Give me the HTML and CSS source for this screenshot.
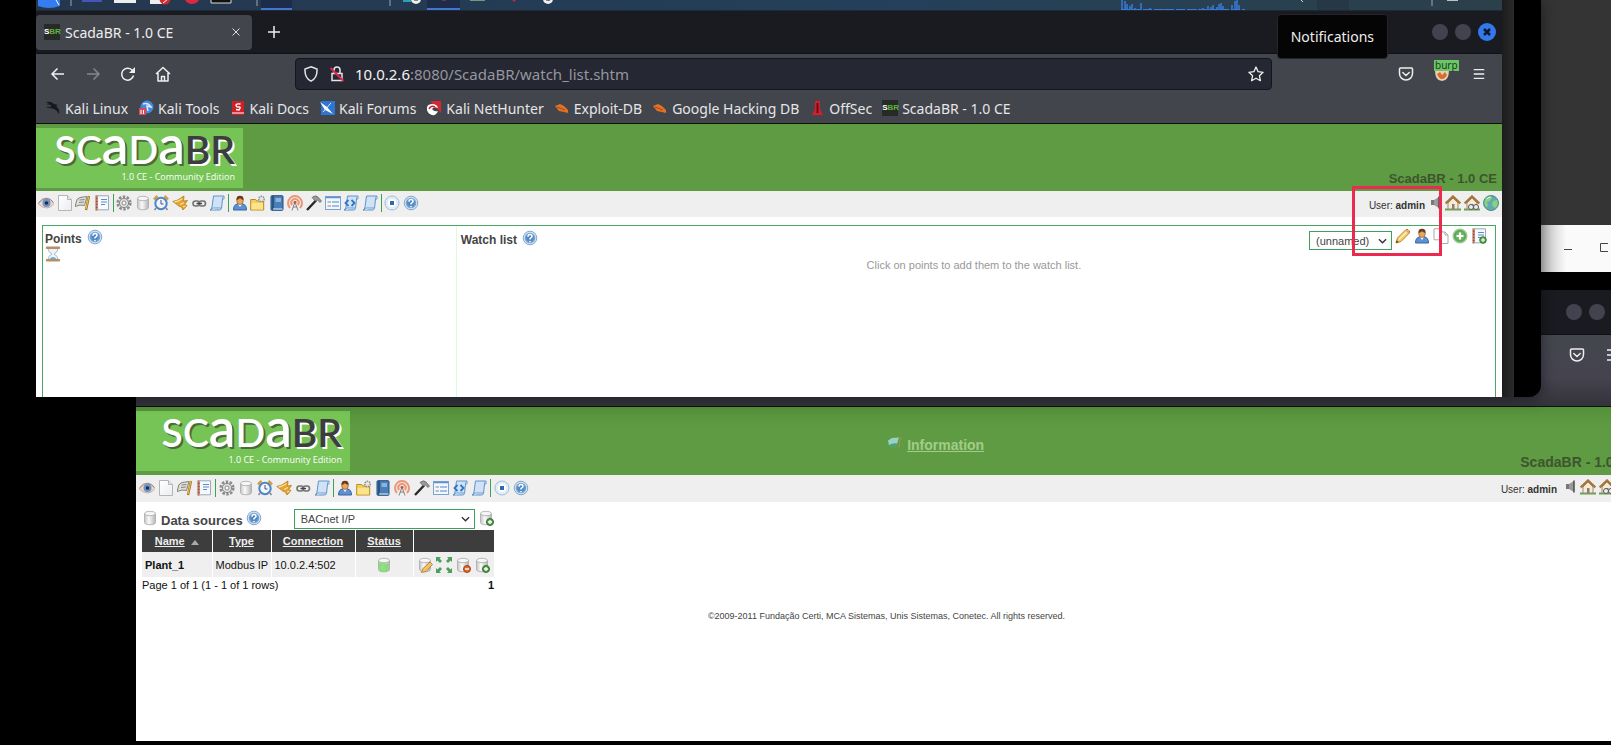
FILE: index.html
```html
<!DOCTYPE html>
<html lang="en">
<head>
<meta charset="utf-8">
<title>ScadaBR - 1.0 CE</title>
<link rel="stylesheet" href="styles.css">
</head>
<body>
<svg class="sprite" aria-hidden="true">
  <defs>
    <radialGradient id="gBlue"><stop offset="0" stop-color="#3c74b8"/><stop offset=".7" stop-color="#5f93cb"/><stop offset="1" stop-color="#86afd9"/></radialGradient>
    <linearGradient id="gCyl"><stop offset="0" stop-color="#c4c4c4"/><stop offset=".4" stop-color="#fafafa"/><stop offset="1" stop-color="#b4b4b4"/></linearGradient>
    <linearGradient id="gPage" x2="1" y2="1"><stop offset="0" stop-color="#fff"/><stop offset="1" stop-color="#e9edf2"/></linearGradient>
  </defs>
  <symbol id="eye" viewBox="0 0 16 16"><path d="M0 8.500Q4 4 8.500 4T16 8.500Q13 13 8.500 13T0 8.500z" fill="#ead9cc" stroke="#b79a8c" stroke-width=".7"/><circle cx="8.500" cy="8" r="4" fill="#6d93c8"/><circle cx="8.500" cy="8" r="1.800" fill="#1b2c50"/><path d="M.5 8Q4 3 8.500 3.200T15.500 7.500" fill="none" stroke="#97827c"/></symbol>
  <symbol id="page" viewBox="0 0 16 16"><path d="M1.500.5h9l4 4v11h-13z" fill="url(#gPage)" stroke="#b5b5b5"/><path d="M10.500.5v4h4" fill="#e5e5e5" stroke="#b5b5b5"/></symbol>
  <symbol id="flag" viewBox="0 0 16 16"><path d="M2 4.500l3-2 7-1-2.500 9-4.500-.5-5 1.500z" fill="#deded8" stroke="#85857c"/><path d="M4.500 5l5-.5M4 7.500l5-.5" stroke="#888"/><path d="M14 1l-3 14" stroke="#a2781e" stroke-width="2.400"/><path d="M13.800 1.500l-2.800 12.500" stroke="#efc253" stroke-width="1"/></symbol>
  <symbol id="report" viewBox="0 0 16 16"><path d="M3.500.8h11v14h-11z" fill="#f6f9fd" stroke="#9aa9bb"/><path d="M2.500.5v15" stroke="#a44b2c" stroke-width="2"/><path d="M1.200 2h3M1.200 5h3M1.200 8h3M1.200 11h3M1.200 14h3" stroke="#e4bfae" stroke-width=".8"/><path d="M7 4.500h6M7 7h6M7 9.500h4" stroke="#5d8cc7" stroke-width="1.200"/></symbol>
  <symbol id="gear" viewBox="0 0 16 16"><circle cx="8" cy="8" r="6.300" fill="none" stroke="#8c8c8c" stroke-width="2.600" stroke-dasharray="2.500 1.450"/><circle cx="8" cy="8" r="4.600" fill="#dedede" stroke="#868686"/><circle cx="8" cy="8" r="2" fill="#fff" stroke="#8c8c8c"/></symbol>
  <symbol id="db" viewBox="0 0 16 16"><path d="M2.500 3.500v9c0 3 11 3 11 0v-9" fill="url(#gCyl)" stroke="#aaa" stroke-width=".8"/><ellipse cx="8" cy="3.500" rx="5.500" ry="2.200" fill="#f6f6f6" stroke="#aaa" stroke-width=".8"/></symbol>
  <symbol id="clock" viewBox="0 0 16 16"><path d="M1 4.500L4.500 1M15 4.500L11.500 1" stroke="#d1a03d" stroke-width="2.500"/><path d="M3 13l-1.500 2M13 13l1.500 2" stroke="#888" stroke-width="1.500"/><circle cx="8" cy="8.500" r="5.700" fill="#f0f6fd" stroke="#4f86c6" stroke-width="2"/><path d="M8 5v4h2.500" fill="none" stroke="#47566c"/></symbol>
  <symbol id="horn" viewBox="0 0 16 16"><path d="M.8 6.500l5-1.500L12 1l-.5 5 4-.5-3 4 2.500 1-4 4.500-1.500-3-3-1-1.500-1.500z" fill="#e2a432" stroke="#b57b18" stroke-width=".8"/><path d="M2.500 7l4-1 4-2.500M8 9.500l4-2M11 12l2.500-1" stroke="#fbe09a" stroke-width="1.300" fill="none"/></symbol>
  <symbol id="chain" viewBox="0 0 16 16"><g fill="none" stroke="#737373" stroke-width="1.600"><rect x="2" y="6" width="6.500" height="5" rx="2.500"/><rect x="8" y="6" width="6.500" height="5" rx="2.500"/></g><path d="M5.500 8.500h5.500" stroke="#444" stroke-width="1.500"/></symbol>
  <symbol id="scroll" viewBox="0 0 16 16"><path d="M4.500 1h10.500q-1.500 1-1.500 3l-1 9.500q-.5 1.500-2 1.500H1q1.500-.5 2-3z" fill="#cfe2f6" stroke="#6093cb"/><path d="M1 15q2 .3 2.500-2h8.500M13.500 4H15V1" fill="#f3f9ff" stroke="#6093cb" stroke-width=".9"/></symbol>
  <symbol id="user" viewBox="0 0 16 16"><path d="M1.500 15q0-5.500 4-6h5q4 .5 4 6z" fill="#5d91d2" stroke="#3664a3"/><path d="M6 9l2 3 2-3z" fill="#fff"/><ellipse cx="8" cy="5.500" rx="3.300" ry="4" fill="#e9a65e" stroke="#8e5827" stroke-width=".7"/><path d="M4.500 5Q4 .7 8 .7T11.500 5Q9 4.500 8 3.200 7 4.500 4.500 5z" fill="#6a3e1a"/></symbol>
  <symbol id="folder" viewBox="0 0 16 16"><path d="M.7 6V4.500h5l1 1.500h7v9h-13z" fill="#f2cf63" stroke="#bb8a25"/><path d="M1.500 8h11.500v6.500H1.500z" fill="#fbe389"/><circle cx="11.500" cy="4" r="2.700" fill="#e6e6e6" stroke="#8e8e8e" stroke-width="1.500" stroke-dasharray="1.500 .8"/></symbol>
  <symbol id="book" viewBox="0 0 16 16"><rect x="2" y=".7" width="12" height="14.600" rx="1" fill="#487fb9" stroke="#234f82"/><path d="M4 1v14" stroke="#214874" stroke-width="1.500"/><path d="M6.500 4h5.500M6.500 6h5.500" stroke="#d4e4f5"/><path d="M4 14h9.500" stroke="#e6eef7"/></symbol>
  <symbol id="antenna" viewBox="0 0 16 16"><g fill="none" stroke="#ec9674" stroke-width="2"><path d="M3 13A7 7 0 1 1 13 13"/><path d="M5.200 10A3.700 3.700 0 1 1 10.800 10"/></g><path d="M8 7l-3 8.500M8 7l3 8.500M6 12h4" stroke="#877f7f" fill="none"/><circle cx="8" cy="7.300" r="1.500" fill="#c25a42"/></symbol>
  <symbol id="hammer" viewBox="0 0 16 16"><path d="M1 15L10 5.500" stroke="#282828" stroke-width="2.400"/><path d="M6 2.500Q9.500-.5 12 2l3.500 4-1.500 1.500L11.500 5 9 6 7 3.500z" fill="#9a9a9a" stroke="#5d5d5d" stroke-width=".7"/></symbol>
  <symbol id="form" viewBox="0 0 16 16"><rect x=".5" y="1.500" width="15" height="13" fill="#f2f7fd" stroke="#7ba3d2"/><path d="M1 2.500h14" stroke="#5d91cf" stroke-width="1.500"/><path d="M2.500 7H6M2.500 11H6" stroke="#888"/><path d="M7 7h7M7 11h7" stroke="#4d87ce" stroke-width="1.200"/></symbol>
  <symbol id="code" viewBox="0 0 16 16"><use href="#scroll"/><path d="M5.500 5l-3 3 3 3M8.500 5l3 3-3 3" fill="none" stroke="#2f77c4" stroke-width="1.800"/></symbol>
  <symbol id="stop" viewBox="0 0 16 16"><circle cx="8" cy="8" r="7" fill="#eaf2fb" stroke="#9fbbdb"/><circle cx="8" cy="8" r="5" fill="#fff" stroke="#d6e3f1"/><rect x="6" y="6" width="4" height="4" fill="#2f6ab0"/></symbol>
  <symbol id="help" viewBox="0 0 16 16"><circle cx="8" cy="8" r="6.800" fill="#d5e3f1" stroke="#82a8d0"/><circle cx="8" cy="8" r="5.300" fill="url(#gBlue)"/><path d="M6 6.700Q6 4.500 8 4.500t2 1.800Q10 7.500 8 8.500v1M8 11v1.200" fill="none" stroke="#fff" stroke-width="1.500"/></symbol>
  <symbol id="speaker" viewBox="0 0 12 16"><path d="M1 5h3v5H1z" fill="#777"/><path d="M4 5l5-3v11l-5-3z" fill="#9a9a9a"/><path d="M9 1.500v12" stroke="#4c4c4c" stroke-width="1.500"/></symbol>
  <symbol id="house" viewBox="0 0 16 16"><path d="M0 14.500h16" stroke="#65a54a" stroke-width="2"/><path d="M3 8v6h10V8L8 3z" fill="#f4ead7" stroke="#9b8b78"/><path d="M.7 8.500L8 1.500l7.300 7" fill="none" stroke="#a87538" stroke-width="2.300"/><path d="M7 9h2.500v5H7z" fill="#8d7d72"/></symbol>
  <symbol id="house2" viewBox="0 0 16 16"><use href="#house"/><circle cx="7" cy="12" r="2.500" fill="#eee" stroke="#555"/><circle cx="12" cy="12" r="2.500" fill="#eee" stroke="#555"/></symbol>
  <symbol id="globe" viewBox="0 0 16 16"><circle cx="8" cy="8" r="7.500" fill="#63aab1" stroke="#4b917c"/><path d="M3 3q4-3 6 0l-2 3-3 1 1 4-2 1Q0 8 3 3zM10 6l4-1q2 5-2 8l-3-3z" fill="#8dd084"/><path d="M4 4q2-2 4-2" stroke="#ddf7ef" fill="none"/></symbol>
  <symbol id="pencil" viewBox="0 0 16 16"><path d="M1 15l1.500-5L11 1.500q1-.7 2 .3l1.200 1.200q1 1 .2 2L6 13.500z" fill="#f6cf68" stroke="#b98228"/><path d="M4 11.500L12.500 3" stroke="#fff1ad" stroke-width="1.500"/><path d="M1 15l.8-2.500L3.500 14z" fill="#4a3720"/><path d="M11 2l3 3" stroke="#d8a09a" stroke-width="1.500"/></symbol>
  <symbol id="copy" viewBox="0 0 16 16"><path d="M1 .8h6l2 2v9H1z" fill="#fff" stroke="#aaa"/><path d="M6.500 4h5.500l3 3v8.500H6.500z" fill="#fff" stroke="#aaa"/><path d="M12 4v3h3" fill="none" stroke="#aaa"/></symbol>
  <symbol id="plus" viewBox="0 0 16 16"><circle cx="8" cy="8" r="6.800" fill="#6ab563" stroke="#9bc994" stroke-width="1.500"/><circle cx="8" cy="8" r="5.300" fill="none" stroke="#4b9d46" stroke-width=".8"/><path d="M8 4.500v7M4.500 8h7" stroke="#fff" stroke-width="2.200"/></symbol>
  <symbol id="reportadd" viewBox="0 0 16 16"><use href="#report"/><circle cx="12" cy="12" r="3.300" fill="#58a651" stroke="#347c31"/><path d="M12 10v4M10 12h4" stroke="#fff"/></symbol>
  <symbol id="glass" viewBox="0 0 16 16"><path d="M3 2.500Q3 6 7 8q-4 2-4 5.500h10Q13 10 9 8q4-2 4-5.500z" fill="#eaf3fb" stroke="#a8bccc"/><path d="M4.500 13Q6 11 8 11t3.500 2z" fill="#69aee0"/><path d="M2 1.800h12M2 14.200h12" stroke="#b98d68" stroke-width="2.400" stroke-linecap="round"/></symbol>
  <symbol id="dbadd" viewBox="0 0 16 16"><use href="#db"/><circle cx="12" cy="12" r="3.500" fill="#589f4d" stroke="#346f2e"/><path d="M12 10v4M10 12h4" stroke="#fff" stroke-width="1.300"/></symbol>
  <symbol id="dbdel" viewBox="0 0 16 16"><use href="#db"/><circle cx="12" cy="12" r="3.500" fill="#e0662c" stroke="#a94213"/><path d="M10 12h4" stroke="#fff" stroke-width="1.500"/></symbol>
  <symbol id="dbedit" viewBox="0 0 16 16"><use href="#db"/><path d="M4.500 15.500L6 11.500 13 5l2.500 2.500L9 14.500z" fill="#f4c45c" stroke="#a9742b" stroke-width=".8"/></symbol>
  <symbol id="dbon" viewBox="0 0 16 16"><use href="#db"/><path d="M2 7q2-2.500 6-1 3 1 4.500 0v7.500q-4 3-8.500 1z" fill="#7ddc6b" opacity=".85"/></symbol>
  <symbol id="expand" viewBox="0 0 16 16"><g fill="#4c9f58"><path d="M0 0h5L3.500 1.500 6 4 4 6 1.500 3.500 0 5zM16 0v5l-1.500-1.500L12 6l-2-2 2.500-2.500L11 0zM0 16v-5l1.500 1.500L4 10l2 2-2.500 2.500L5 16zM16 16h-5l1.500-1.500L10 12l2-2 2.500 2.500L16 11z"/></g></symbol>
  <symbol id="info" viewBox="0 0 16 16"><circle cx="7" cy="8" r="5.500" fill="#4ea56c" opacity=".8"/><path d="M2 5.500l4-2.500 7-.5-2 6q-4-1-8 1.500z" fill="#9bd0ca"/><path d="M14.500 2l-1.500 11" stroke="#b58a42"/></symbol>
  <symbol id="pocket" viewBox="0 0 16 16"><path d="M2.500 2h11q1 0 1 1v4.500a6.500 6.500 0 0 1-13 0V3q0-1 1-1z" fill="none" stroke="currentColor" stroke-width="1.500"/><path d="M4.800 6.500L8 9.500l3.200-3" fill="none" stroke="currentColor" stroke-width="1.500" stroke-linecap="round"/></symbol>
  <symbol id="menu" viewBox="0 0 16 16"><path d="M2 3h12M2 8h12M2 13h12" stroke="currentColor" stroke-width="1.500"/></symbol>
</svg>

<main class="desktop">
  <section class="side-window" aria-label="Background window">
    <div class="side-title"><svg width="44" height="16" viewBox="0 0 44 16"><path d="M0 8.500h8M36.500 2.500h9v8h-9z" fill="none" stroke="#444"/></svg></div>
  </section>

  <section class="window back" aria-label="Data sources">
    <div class="tabbar">
      <span class="dots"><i></i><i></i><i></i></span>
    </div>
    <div class="back-tools">
      <svg class="ico"><use href="#pocket"/></svg>
      <svg class="ico"><use href="#menu"/></svg>
    </div>
    <header class="banner">
      <div class="logo"><div class="mark"><span>SC</span><span class="low">a</span><span>D</span><span class="low">a</span><span class="dark">BR</span></div><small>1.0 CE - Community Edition</small></div>
      <a class="information" href="#"><svg class="ico"><use href="#info"/></svg><span>Information</span></a>
      <strong class="version">ScadaBR - 1.0 CE</strong>
    </header>
    <div class="navrow">
      <nav class="icons wide">
        <a href="#" aria-label="Watch list"><svg class="ico"><use href="#eye"/></svg></a><a href="#" aria-label="Views"><svg class="ico"><use href="#page"/></svg></a><a href="#" aria-label="Events"><svg class="ico"><use href="#flag"/></svg></a><a href="#" aria-label="Reports"><svg class="ico"><use href="#report"/></svg></a><i></i>
        <a href="#" aria-label="Handlers"><svg class="ico"><use href="#gear"/></svg></a><a href="#" aria-label="Data sources"><svg class="ico"><use href="#db"/></svg></a><a href="#" aria-label="Scheduled events"><svg class="ico"><use href="#clock"/></svg></a><a href="#" aria-label="Compound events"><svg class="ico"><use href="#horn"/></svg></a><a href="#" aria-label="Links"><svg class="ico"><use href="#chain"/></svg></a><a href="#" aria-label="Scripting"><svg class="ico"><use href="#scroll"/></svg></a><i></i>
        <a href="#" aria-label="Users"><svg class="ico"><use href="#user"/></svg></a><a href="#" aria-label="Hierarchy"><svg class="ico"><use href="#folder"/></svg></a><a href="#" aria-label="Mailing lists"><svg class="ico"><use href="#book"/></svg></a><a href="#" aria-label="Publishers"><svg class="ico"><use href="#antenna"/></svg></a><a href="#" aria-label="Maintenance"><svg class="ico"><use href="#hammer"/></svg></a><a href="#" aria-label="System"><svg class="ico"><use href="#form"/></svg></a><a href="#" aria-label="Export"><svg class="ico"><use href="#code"/></svg></a><a href="#" aria-label="SQL"><svg class="ico"><use href="#scroll"/></svg></a><i></i>
        <a href="#" aria-label="Log out"><svg class="ico"><use href="#stop"/></svg></a><a href="#" aria-label="Help"><svg class="ico"><use href="#help"/></svg></a>
      </nav>
      <div class="account"><span class="who">User: <b>admin</b></span><svg class="speaker"><use href="#speaker"/></svg><svg class="ico"><use href="#house"/></svg><svg class="ico"><use href="#house2"/></svg><svg class="ico"><use href="#globe"/></svg></div>
    </div>
    <div class="sources">
      <div class="sources-head">
        <svg class="ico"><use href="#db"/></svg><label for="ds">Data sources</label><svg class="ico"><use href="#help"/></svg>
        <span class="pick"><select id="ds"><option>BACnet I/P</option></select><svg class="chev" viewBox="0 0 10 6"><path d="M1 1l4 4 4-4" fill="none" stroke="#333" stroke-width="1.500"/></svg></span>
        <button aria-label="Add data source"><svg class="ico"><use href="#dbadd"/></svg></button>
      </div>
      <table>
        <colgroup><col class="c1"><col class="c2"><col class="c3"><col class="c4"><col class="c5"></colgroup>
        <thead><tr><th><a href="#">Name</a> <svg class="sort" viewBox="0 0 8 5"><path d="M0 5l4-5 4 5z" fill="#aaa"/></svg></th><th><a href="#">Type</a></th><th><a href="#">Connection</a></th><th><a href="#">Status</a></th><th></th></tr></thead>
        <tbody><tr><td><b>Plant_1</b></td><td>Modbus IP</td><td>10.0.2.4:502</td><td class="mid"><svg class="ico"><use href="#dbon"/></svg></td>
        <td><div class="acts"><button aria-label="Edit"><svg class="ico"><use href="#dbedit"/></svg></button><button aria-label="Expand"><svg class="ico"><use href="#expand"/></svg></button><button aria-label="Delete"><svg class="ico"><use href="#dbdel"/></svg></button><button aria-label="Copy"><svg class="ico"><use href="#dbadd"/></svg></button></div></td></tr></tbody>
      </table>
      <div class="pager"><span>Page 1 of 1 (1 - 1 of 1 rows)</span><b>1</b></div>
    </div>
    <footer>©2009-2011 Fundação Certi, MCA Sistemas, Unis Sistemas, Conetec. All rights reserved.</footer>
  </section>

  <div class="screen">
    <section class="window front" aria-label="Watch list">
      <div class="taskbar">
        <svg width="560" height="11" viewBox="36 0 560 11">
          <path d="M38 0h22v6q-11 4-22 0z" fill="#347cf0"/><path d="M56 0l3 5" stroke="#fff"/><path d="M71 0v6M257 0v6M390 0v6" stroke="#9aa8b5"/>
          <path d="M82 0h20v2H82z" fill="#4456ba"/><path d="M114 0h22v3h-22zM150 0h12v4h-12z" fill="#eee"/><circle cx="165" cy="-1" r="5.500" fill="#d02a31"/><path d="M163 3l5-4" stroke="#fff"/><circle cx="192" cy="-4" r="8" fill="#dd2940"/><path d="M211-3h20v6h-20z" fill="#111" stroke="#ddd"/>
          <path d="M261 0h31v10h-31zM427 0h33v10h-33z" fill="#1c2c49"/><path d="M261 9h31M427 9h33" stroke="#4176d3" stroke-width="2"/>
          <path d="M403 0h8v2h-8z" fill="#27a3b8"/><circle cx="416" cy="-1" r="5" fill="#eee"/><path d="M414 0h4" stroke="#222"/><path d="M441 0l3 1 3-1z" fill="#a3304b"/><path d="M470 0h15v1h-15z" fill="#6a9b83"/><path d="M512 0h4l-2 2z" fill="#b92b3d"/><circle cx="548" cy="-1" r="5" fill="#eee"/><path d="M546 0h3v1" stroke="#222" fill="none"/>
        </svg>
        <svg width="381" height="11" viewBox="1121 0 381 11">
          <path d="M1317 0h32v10h-32z" fill="#263746"/>
          <path d="M1122 10V0M1125 10V1M1127 10V4M1130 10V6M1132 10V4M1135 10V8M1141 10V3M1150 10V8M1164 10V9M1172 10V9M1180 10V9M1188 10V9M1196 10V9M1203 10V8M1208 10V6M1211 10V7M1213 10V5M1217 10V7M1219 10V4M1221 10V3M1223 10V6M1232 10V5M1235 10V1M1237 10V0M1239 10V5" stroke="#397bdc" stroke-width="1.500"/><path d="M1121 9.500h124" stroke="#397bdc" stroke-dasharray="9 2"/>
          <path d="M1301 0l2 2" stroke="#ddd"/><path d="M1432 0v6" stroke="#9aa8b5"/><path d="M1447 0h11v1h-11z" fill="#b7c2c9"/>
        </svg>
      </div>
      <div class="tabbar">
        <div class="tab"><b class="sbr">S<em>BR</em></b><span>ScadaBR - 1.0 CE</span><button aria-label="Close tab"><svg width="8" height="8"><path d="M.5.5l7 7M7.500.5l-7 7" stroke="#ddd"/></svg></button></div>
        <button class="newtab" aria-label="New tab"><svg width="12" height="12"><path d="M6 0v12M0 6h12" stroke="#eee" stroke-width="1.500"/></svg></button>
        <span class="dots"><i></i><i></i><i class="close"><svg width="18" height="18"><path d="M6 6l6 6M12 6l-6 6" stroke="#10182b" stroke-width="2.500"/></svg></i></span>
      </div>
      <div class="tools">
        <div class="navbtns">
          <button aria-label="Back"><svg class="ico"><path d="M14 8H2M7.500 2.500L2 8l5.500 5.500" fill="none" stroke="#f0f0f0" stroke-width="1.500"/></svg></button>
          <button aria-label="Forward"><svg class="ico"><path d="M2 8h12M8.500 2.500L14 8l-5.500 5.500" fill="none" stroke="#85868c" stroke-width="1.500"/></svg></button>
          <button aria-label="Reload"><svg class="ico"><path d="M13.500 9.500a6 6 0 1 1-1.700-5.700L14 6" fill="none" stroke="#f0f0f0" stroke-width="1.500"/><path d="M15 1v6H9z" fill="#f0f0f0"/></svg></button>
          <button aria-label="Home"><svg class="ico"><path d="M1 8l7-6.500L15 8M3 7v8h10V7M6.500 15v-4.500h3V15" fill="none" stroke="#f0f0f0" stroke-width="1.500" stroke-linejoin="round"/></svg></button>
        </div>
        <div class="url">
          <svg class="ico"><path d="M8 .8l6 2.200q.5 9-6 12.200Q1.500 12 2 3z" fill="none" stroke="#e5e5e8" stroke-width="1.500"/></svg>
          <svg class="ico"><path d="M3 7.500h10v7H3zM5 7V4a3 3 0 0 1 6 0v3" fill="none" stroke="#e5e5e8" stroke-width="1.500"/><path d="M1.500 2l13 13" stroke="#e22850" stroke-width="2"/></svg>
          <span class="address">10.0.2.6<em>:8080/ScadaBR/watch_list.shtm</em></span>
          <button aria-label="Bookmark"><svg class="ico"><path d="M8 1l2.100 4.700 5 .6-3.700 3.400 1 5L8 12.200l-4.400 2.500 1-5L.9 6.300l5-.6z" fill="none" stroke="#f0f0f0" stroke-width="1.300" stroke-linejoin="round"/></svg></button>
        </div>
        <div class="extras">
          <button aria-label="Pocket"><svg class="ico"><use href="#pocket"/></svg></button>
          <button class="burp" aria-label="Proxy"><svg width="18" height="16" viewBox="0 0 18 16"><path d="M1 4h14q0 11-7 11T1 4z" fill="#e5d1b3"/><path d="M3 8l3-2 2 3 3-3 2 3q-2 4-5 4t-5-5z" fill="#d96d2d"/></svg><b>burp</b></button>
          <button aria-label="Menu"><svg class="ico menu"><use href="#menu"/></svg></button>
        </div>
      </div>
      <nav class="bookmarks">
        <a href="#"><svg class="ico"><path d="M1 2q5-1 8 2l4 1-2 1q4 3 3 8-2-4-5-5-5-1-3-4L1 4l3-.500z" fill="#17191c"/><path d="M2 7l4 1" stroke="#17191c"/></svg>Kali Linux</a>
        <a href="#"><svg class="ico"><circle cx="9" cy="7" r="6.500" fill="#4388df"/><path d="M5 4q5-2 8 3l-4-1 1 5" fill="none" stroke="#dbe9fb" stroke-width="1.500"/><path d="M1 8h7v7H1z" fill="#d84b56"/><path d="M3 14v-4M5.500 14v-4" stroke="#fff"/></svg>Kali Tools</a>
        <a href="#"><svg class="ico"><path d="M2 1h12v14H2z" fill="#cf2026"/><path d="M10.500 4q-5-.5-4.500 1.500t3 1.500 0 3l-3-.5" fill="none" stroke="#fff" stroke-width="1.300"/><path d="M2 13h12" stroke="#fff"/></svg>Kali Docs</a>
        <a href="#"><svg class="ico"><path d="M2 1h14v14H2z" fill="#2f75d2"/><path d="M1 2l7 5 6 7-8-4z" fill="#fff"/><path d="M12 3l-8 9" stroke="#dceafb"/></svg>Kali Forums</a>
        <a href="#"><svg class="ico"><path d="M4 1h11v12z" fill="#d42933"/><path d="M1 10Q0 4 6 4q5 0 6 4-4-2-6 1 2 3 6 2-2 5-6 4t-5-5z" fill="#fff"/><path d="M3 9q2-4 6-2" stroke="#c92330" fill="none" stroke-width="1.500"/></svg>Kali NetHunter</a>
        <a href="#"><svg class="ico"><path d="M1 6l5-2 4 2 4 4v3l-4-1-5-1z" fill="#e27225"/><path d="M3 7l8 3" stroke="#af4715"/></svg>Exploit-DB</a>
        <a href="#"><svg class="ico"><path d="M1 6l5-2 4 2 4 4v3l-4-1-5-1z" fill="#e27225"/><path d="M3 7l8 3" stroke="#af4715"/></svg>Google Hacking DB</a>
        <a href="#"><svg class="ico"><path d="M6 1h5v8l3 6H3l3-6z" fill="#d61f2c"/><path d="M8.500 3v10" stroke="#6d0d14" stroke-width="2"/></svg>OffSec</a>
        <a href="#"><b class="sbr">S<em>BR</em></b>ScadaBR - 1.0 CE</a>
      </nav>
      <header class="banner">
        <div class="logo"><div class="mark"><span>SC</span><span class="low">a</span><span>D</span><span class="low">a</span><span class="dark">BR</span></div><small>1.0 CE - Community Edition</small></div>
        <strong class="version">ScadaBR - 1.0 CE</strong>
      </header>
      <div class="navrow">
        <nav class="icons">
          <a href="#" aria-label="Watch list"><svg class="ico"><use href="#eye"/></svg></a><a href="#" aria-label="Views"><svg class="ico"><use href="#page"/></svg></a><a href="#" aria-label="Events"><svg class="ico"><use href="#flag"/></svg></a><a href="#" aria-label="Reports"><svg class="ico"><use href="#report"/></svg></a><i></i>
          <a href="#" aria-label="Handlers"><svg class="ico"><use href="#gear"/></svg></a><a href="#" aria-label="Data sources"><svg class="ico"><use href="#db"/></svg></a><a href="#" aria-label="Scheduled events"><svg class="ico"><use href="#clock"/></svg></a><a href="#" aria-label="Compound events"><svg class="ico"><use href="#horn"/></svg></a><a href="#" aria-label="Links"><svg class="ico"><use href="#chain"/></svg></a><a href="#" aria-label="Scripting"><svg class="ico"><use href="#scroll"/></svg></a><i></i>
          <a href="#" aria-label="Users"><svg class="ico"><use href="#user"/></svg></a><a href="#" aria-label="Hierarchy"><svg class="ico"><use href="#folder"/></svg></a><a href="#" aria-label="Mailing lists"><svg class="ico"><use href="#book"/></svg></a><a href="#" aria-label="Publishers"><svg class="ico"><use href="#antenna"/></svg></a><a href="#" aria-label="Maintenance"><svg class="ico"><use href="#hammer"/></svg></a><a href="#" aria-label="System"><svg class="ico"><use href="#form"/></svg></a><a href="#" aria-label="Export"><svg class="ico"><use href="#code"/></svg></a><a href="#" aria-label="SQL"><svg class="ico"><use href="#scroll"/></svg></a><i></i>
          <a href="#" aria-label="Log out"><svg class="ico"><use href="#stop"/></svg></a><a href="#" aria-label="Help"><svg class="ico"><use href="#help"/></svg></a>
        </nav>
        <div class="account"><span class="who">User: <b>admin</b></span><svg class="speaker"><use href="#speaker"/></svg><svg class="ico"><use href="#house"/></svg><svg class="ico"><use href="#house2"/></svg><svg class="ico"><use href="#globe"/></svg></div>
      </div>
      <div class="page">
        <div class="points">
          <div class="heading"><b>Points</b><svg class="ico"><use href="#help"/></svg></div>
          <svg class="ico"><use href="#glass"/></svg>
        </div>
        <div class="watch">
          <div class="watch-head">
            <div class="heading"><label for="wl">Watch list</label><svg class="ico"><use href="#help"/></svg></div>
            <div class="watch-tools">
              <span class="pick small"><select id="wl"><option>(unnamed)</option></select><svg class="chev" viewBox="0 0 10 6"><path d="M1 1l4 4 4-4" fill="none" stroke="#333" stroke-width="1.500"/></svg></span>
              <button aria-label="Edit"><svg class="ico"><use href="#pencil"/></svg></button><button aria-label="Users"><svg class="ico"><use href="#user"/></svg></button><button aria-label="Copy"><svg class="ico"><use href="#copy"/></svg></button><button aria-label="Add"><svg class="ico"><use href="#plus"/></svg></button><button aria-label="Report"><svg class="ico"><use href="#reportadd"/></svg></button>
            </div>
          </div>
          <p>Click on points to add them to the watch list.</p>
        </div>
      </div>
    </section>
    <div class="edge"></div>
    <div class="tooltip" role="tooltip">Notifications</div>
    <div class="marker"></div>
  </div>
</main>
</body>
</html>
```
FILE: styles.css
```css
* { box-sizing: border-box; }
body { margin: 0; background: #000; font-family: "Liberation Sans", Arial, sans-serif; font-size: 11px; color: #333; overflow: hidden; }
button { background: none; border: 0; padding: 0; display: flex; font: inherit; color: inherit; }
svg { display: block; flex: none; }
a { color: inherit; }
.sprite { position: absolute; width: 0; height: 0; }
.ico { width: 16px; height: 16px; }
.speaker { width: 12px; height: 16px; }
.sbr { width: 16px; height: 16px; background: #262b28; color: #fff; font: 700 8px/16px "Liberation Sans", Arial, sans-serif; }
.sbr em { font-style: normal; color: #60b340; }

.desktop { position: relative; height: 100vh; min-height: 640px; overflow: hidden; background: #000; }
.window { display: flex; flex-direction: column; overflow: hidden; background: #fff; }

/* windows on the desktop */
.side-window { position: absolute; right: 0; top: 0; width: 90px; height: 272px; background: #343434; display: flex; align-items: flex-end; }
.side-title { flex: 1; height: 47px; background: linear-gradient(90deg, #bbb 22%, #fafafa 50%); display: flex; align-items: center; padding-left: 43px; overflow: hidden; }
.back { position: absolute; left: 136px; right: -26px; top: 290px; bottom: 4px; }
.screen { position: absolute; left: 0; right: 70px; top: 0; height: 397px; display: flex; padding: 0 27px 0 36px; background: #000; border-radius: 0 0 12px 0; box-shadow: 0 2px 14px rgba(0, 0, 0, .45); }
.front { flex: 1; min-width: 0; }
.edge { width: 12px; background: linear-gradient(90deg, #1c1c1c, #2a2a2a); }

/* browser chrome */
.taskbar { flex: none; height: 11px; display: flex; justify-content: space-between; background: linear-gradient(90deg, #25374f, #24405a 60%, #2c404a); border-bottom: 1px solid #1e2b36; overflow: hidden; }
.tabbar { flex: none; height: 43px; display: flex; align-items: center; background: #1a1b20; border-bottom: 1px solid #101116; color: #eee; font: 15px "Noto Sans", sans-serif; }
.back .tabbar { height: 45px; }
.tab { width: 216px; height: 35px; display: flex; align-items: center; gap: 5px; padding: 0 12px 0 8px; border-radius: 4px; background: #42454c; font-size: 14px; }
.tab span { flex: 1; }
.newtab { margin-left: 16px; }
.dots { margin-left: auto; display: flex; align-items: center; gap: 7px; padding-right: 6px; }
.dots i { width: 16px; height: 16px; border-radius: 50%; background: #42434e; }
.dots .close { width: 18px; height: 18px; background: #3478ee; }
.back .dots { padding-right: 9px; }
.back-tools { flex: none; height: 72px; display: flex; justify-content: flex-end; gap: 20px; padding: 12px 16px 0; background: linear-gradient(#44474e, #44434f 60%, #34333b); border-bottom: 1px solid #0d1209; color: #eee; }
.tools { flex: none; height: 39px; display: flex; align-items: center; background: #42454c; color: #eee; }
.navbtns { display: flex; gap: 19px; width: 259px; padding-left: 14px; }
.url { flex: 1; height: 32px; display: flex; align-items: center; gap: 10px; padding: 0 7px; border: 1px solid #15161c; border-radius: 4px; background: #252732; }
.address { flex: 1; font: 15px "Noto Sans", sans-serif; color: #f2f2f4; }
.address em { font-style: normal; color: #95969f; }
.extras { width: 230px; display: flex; justify-content: flex-end; align-items: center; gap: 20px; padding-right: 16px; }
.extras .menu { width: 14px; }
.burp { position: relative; }
.burp b { position: absolute; left: 0; top: -6px; padding: 0 1px; background: #6cc669; color: #173f18; font: 10px/11px "Noto Sans", sans-serif; }
.bookmarks { flex: none; height: 31px; display: flex; align-items: center; gap: 10px; padding: 0 9px; background: #42454c; border-bottom: 1px solid #0d1209; color: #e6e6e8; font: 14px "Noto Sans", sans-serif; white-space: nowrap; }
.bookmarks a { display: flex; align-items: center; gap: 4px; text-decoration: none; }

/* application header */
.banner { flex: none; height: 67px; display: flex; align-items: center; justify-content: space-between; background: #5f9b43; }
.logo { width: 207px; height: 60px; padding-right: 8px; background: #76c356; color: #fff; text-align: right; }
.mark { display: flex; justify-content: flex-end; align-items: baseline; height: 42px; font: 600 39px/32px Lato, sans-serif; text-shadow: 2px 2px 0 #4a6b3b; }
.mark .low { font-size: 53px; }
.mark .dark { color: #3d3d3d; text-shadow: 2px 2px 0 #fff; }
.logo small { display: block; font: 9px/14px "Open Sans", sans-serif; }
.back .banner { height: 68px; background: linear-gradient(#55903a, #5f9b43 30%); }
.back .logo { width: 214px; }
.information { display: flex; align-items: center; gap: 5px; padding-top: 8px; color: #a2cd88; font-size: 14px; font-weight: 700; }
.information .ico { margin-bottom: 4px; }
.version { align-self: flex-end; padding: 0 5px 5px 0; font-size: 13px; color: #3d552f; }
.back .version { padding-right: 0; font-size: 14px; }
.navrow { flex: none; height: 26px; display: flex; justify-content: space-between; align-items: center; padding: 0 3px 2px 2px; background: #efefef; }
.back .navrow { height: 27px; padding-left: 3px; }
.icons { width: 381px; display: flex; justify-content: space-between; align-items: center; }
.icons.wide { width: 390px; }
.icons i { width: 1px; height: 18px; background: #39a34f; }
.account { display: flex; gap: 3px; }
.who { padding-top: 5px; margin-right: 2px; font-size: 10px; line-height: 12px; }
.back .who { margin-right: 5px; }

/* watch list */
.page { flex: 1; display: flex; margin: 8px 6px 0; border: 1px solid #4aa664; border-bottom: 0; color: #444; }
.points { width: 28.5%; padding: 3px 2px; border-right: 1px solid #e2f7e2; }
.heading { display: flex; gap: 5px; font-size: 12px; font-weight: 700; line-height: 20px; }
.points .heading { height: 17px; }
.watch { flex: 1; padding: 2px 8px 0 4px; }
.watch-head { display: flex; justify-content: space-between; align-items: flex-start; }
.watch-head .heading { line-height: 24px; }
.watch-head .heading .ico { margin-top: 2px; }
.watch-tools { display: flex; gap: 3px; align-items: flex-start; }
.watch p { margin: 6px 0; text-align: center; color: #999; font-size: 11px; line-height: 14px; }
.pick { position: relative; display: flex; }
select { appearance: none; width: 100%; border: 1px solid #39a35c; border-radius: 0; background: #fff; padding: 0 6px; font: 11px "Liberation Sans", Arial, sans-serif; color: #444; }
.chev { position: absolute; right: 5px; top: 7px; width: 9px; height: 6px; }
.small { width: 83px; height: 19px; margin-top: 3px; }

/* data sources */
.sources { width: 364px; padding: 6px 6px 0; color: #111; }
.sources-head { display: flex; align-items: center; gap: 3px; height: 22px; }
.sources-head .ico { margin-bottom: 2px; }
.sources-head label { font-size: 13px; font-weight: 700; color: #444; padding-top: 3px; }
.sources-head .pick { flex: 1; height: 20px; margin-left: 29px; }
table { width: 100%; table-layout: fixed; border-collapse: collapse; }
.c1 { width: 70px; } .c2 { width: 59px; } .c3 { width: 84px; } .c4 { width: 58px; }
th, td { padding: 0 3px; white-space: nowrap; border-left: 1px solid #fff; }
th:first-child, td:first-child { border-left: 0; }
th { height: 22px; background: #3d3d3d; color: #eee; }
td { height: 25px; background: #efefef; }
.sort { display: inline-block; width: 8px; height: 5px; margin-left: 3px; }
.mid .ico { margin: auto; }
.acts { display: flex; gap: 3px; }
.pager { display: flex; justify-content: space-between; line-height: 16px; }
footer { margin-top: 17px; text-align: center; font-size: 9px; line-height: 12px; color: #444; }

/* overlays */
.tooltip { position: absolute; right: 153px; top: 14px; padding: 12px 13px; border: 1px solid #24252a; border-radius: 4px; background: #050505; color: #eee; font: 14px/19px "Noto Sans", sans-serif; }
.marker { position: absolute; right: 99px; top: 186px; width: 90px; height: 70px; border: 3px solid #ec2a4f; }
```
